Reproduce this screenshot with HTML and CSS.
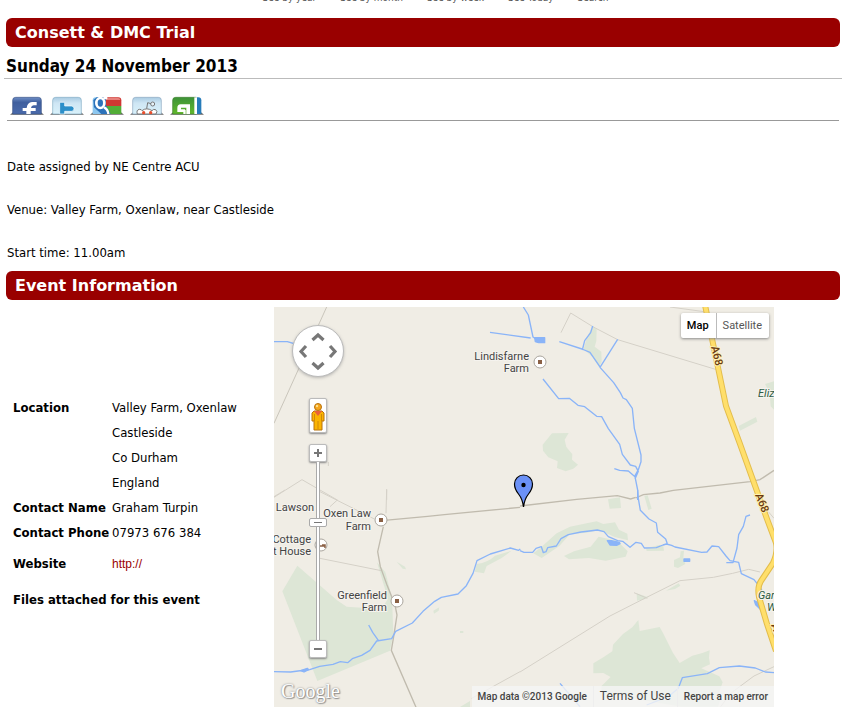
FILE: index.html
```html
<!DOCTYPE html>
<html lang="en">
<head>
<meta charset="utf-8">
<title>Consett &amp; DMC Trial</title>
<link rel="stylesheet" href="styles.css">
</head>
<body>
<nav class="views" aria-label="Calendar views">
  <a href="#">See by year</a>
  <a href="#">See by month</a>
  <a href="#">See by week</a>
  <a href="#">See Today</a>
  <a href="#">Search</a>
</nav>
<main class="event">
  <h1 class="bar">Consett &amp; DMC Trial</h1>
  <h2 class="date">Sunday 24 November 2013</h2>
  <div class="share">
    <a href="#" aria-label="Facebook"><svg viewBox="0 0 102 60">
      <defs>
        <linearGradient id="fb" x2="0" y2="1"><stop offset="0" stop-color="#6f8ec6"/><stop offset=".3" stop-color="#3f5f9e"/><stop offset="1" stop-color="#4a6aab"/></linearGradient>
        <linearGradient id="pale" x2="0" y2="1"><stop offset="0" stop-color="#a9cbe2"/><stop offset=".35" stop-color="#cfe6f4"/><stop offset="1" stop-color="#d9f2fb"/></linearGradient>
        <linearGradient id="green" x2="0" y2="1"><stop offset="0" stop-color="#3d9238"/><stop offset="1" stop-color="#62b92b"/></linearGradient>
      </defs>
      <path d="M0 56l10-8h82l10 8z" fill="#666"/><path d="M8 54V13q0-9 9-9h68q9 0 9 9v41z" fill="url(#fb)" stroke="#3b5487" stroke-width="2"/><path d="M38 36h12q2-17 16-18h14v10h-9q-7 1-8 8h14v9H62v9H49v-9H38z" fill="#fff"/>
    </svg></a>
    <a href="#" aria-label="Twitter"><svg viewBox="0 0 102 60">
      <path d="M0 56l10-8h82l10 8z" fill="#666"/><path d="M8 54V13q0-9 9-9h68q9 0 9 9v41z" fill="url(#pale)" stroke="#83adc4" stroke-width="2"/><path d="M29 19h15v11h20q8 0 8 8t-8 8H44v8H29z" fill="#2c8fc9" stroke="#fff" stroke-width="2"/>
    </svg></a>
    <a href="#" aria-label="Google Bookmarks"><svg viewBox="0 0 102 60">
      <path d="M0 56l10-8h82l10 8z" fill="#666"/><path d="M8 54V13q0-9 9-9h35v50z" fill="#8dc7ef"/><path d="M40 4h45q9 0 9 9v17H40z" fill="#cf3732"/><path d="M46 6h39q5 0 6 6H46z" fill="#e8807b"/><path d="M46 30h48v24H58z" fill="#52ad37"/><path d="M10 12l10-8h28v24l14 26H34L12 34z" fill="#2c72ba"/><ellipse cx="31" cy="21" rx="12" ry="15" fill="#2c72ba" stroke="#fff" stroke-width="8"/><path d="M42 34q12 6 13 20M40 6h12" fill="none" stroke="#fff" stroke-width="7"/>
    </svg></a>
    <a href="#" aria-label="Reddit"><svg viewBox="0 0 102 60">
      <path d="M0 56l10-8h82l10 8z" fill="#666"/><path d="M8 54V13q0-9 9-9h68q9 0 9 9v41z" fill="url(#pale)" stroke="#8ca8bf" stroke-width="2"/><path d="M22 54q-4-12 6-14 7 0 8 4 14-11 30 0 4-6 11-3 7 5 1 13z" fill="#fff" stroke="#777" stroke-width="3"/><path d="M50 38l3-18 10 3" fill="none" stroke="#777" stroke-width="3"/><circle cx="68" cy="24" r="6" fill="#e7f3fa" stroke="#777" stroke-width="3"/><circle cx="41" cy="50" r="5" fill="#e8502d"/><circle cx="62" cy="50" r="5" fill="#e8502d"/>
    </svg></a>
    <a href="#" aria-label="StumbleUpon"><svg viewBox="0 0 102 60">
      <path d="M0 56l10-8h82l10 8z" fill="#666"/><path d="M8 54V13q0-9 9-9h62v50z" fill="url(#green)" stroke="#3f8231" stroke-width="2"/><path d="M73 4h8v50h-8z" fill="#fff"/><path d="M81 4h4q9 0 9 9v41H81z" fill="#277cba"/><path d="M22 36q0-11 10-11h28v29H49V35H33v5h12v8H22z" fill="#fff"/><path d="M40 42h7v12h-7z" fill="#fff"/>
    </svg></a>
  </div>
  <div class="description">
    <p>Date assigned by NE Centre ACU</p>
    <p>Venue: Valley Farm, Oxenlaw, near Castleside</p>
    <p>Start time: 11.00am</p>
  </div>
  <h2 class="bar">Event Information</h2>
  <div class="info">
    <table class="details">
      <tbody>
        <tr><th scope="row">Location</th><td>Valley Farm, Oxenlaw</td></tr>
        <tr><th></th><td>Castleside</td></tr>
        <tr><th></th><td>Co Durham</td></tr>
        <tr><th></th><td>England</td></tr>
        <tr><th scope="row">Contact Name</th><td>Graham Turpin</td></tr>
        <tr><th scope="row">Contact Phone</th><td>07973 676 384</td></tr>
        <tr class="tall"><th scope="row">Website</th><td><a href="#">http://</a></td></tr>
        <tr class="tall"><th colspan="2">Files attached for this event</th></tr>
      </tbody>
    </table>
    <section class="map" aria-label="Map">
      <svg class="canvas" viewBox="0 0 500 400">
        <rect width="500" height="400" fill="#f0ede5"/>
        <!-- woodland -->
        <g fill="#dde6d6">
          <g transform="translate(246 -7) scale(.33333)">
            <path d="M218 78l12 10-1 35-5 17 20 15 1 31-8 15-20-30-26-24 10-35z"/>
            <path d="M96 400l50-1-12 20 5 22 18 22-1 16 18 15-14 12-23 8-26-10 2-20-28-12-16-20-1-18z"/>
            <path d="M656 378l52-27 4 14-52 27zM735 252l27-8v85l-10-10-3-40z"/>
          </g>
          <g transform="translate(-4 183) scale(.33333)">
            <path d="M82 227L37 304l105 269 218-91 10-50-4-110-20-75-25-30 15 50 18 60-20 30-104-7-30-20z"/>
            <path d="M380 215l25 15 3 8-10-2zM490 362l18-10-2 10-14 9zM570 423h10v6h-10zM620 222q35-5 55-25l50-15-30 22-45 24-8 22-28-5zM570 651l30-18v18z"/>
          </g>
          <g transform="translate(246 183) scale(.33333)">
            <path d="M264 28l36-6 3 32-34 2zM373 18l10-2 12 40-10 4z"/>
            <path d="M40 190l25-20 45-40 40-20 50-10 30-6 20 8 35-5 12 22 25 12 2 20-40-10-46-21-38 8-50 4-32 36-53 36z"/>
            <path d="M132 198l30-14 50-14 24-30 55 12 32 32-6 16-60 12-50-8-60 4z"/>
            <path d="M378 175l40-10 12 4 2 13-52 1zM462 210l18-8 2-18 10-2-2 22 6 18-22 12-12-4zM438 302l38-22 5 7-16 10zM350 310l35 12-12 6-22 4z"/>
            <path d="M355 390l-18 22-28 20-30 32-2 20-27 18-30 18v30l30-1 22 12-28 28v20l240 41h110l10-30-6-15 10-28-10-18-54-24 26-12-3-20 2-22-22 8-30 8-38 22-20-30-30-60-10-18-60 12z"/>
          </g>
        </g>
        <!-- minor roads and boundaries -->
        <g fill="none" stroke="#d5d1c8" stroke-width="3">
          <g transform="translate(-4 -7) scale(.33333)"><path d="M170 21L12 370" stroke="#c9c5bb"/><path d="M12 592l84-53 106 61M350 567v33M175 486v12"/></g>
          <g transform="translate(246 -7) scale(.33333)"><path d="M123 98l29-59 68 42 73 38 300 91M450 21l110 15"/></g>
          <g transform="translate(-4 183) scale(.33333)"><path d="M12 20L45 0M150 5l163 82M180 50l22-20M350 0l-2 70M150 205l184 37M750 545l-145 80"/></g>
          <g transform="translate(246 183) scale(.33333)"><path d="M0 546l270-168 110-56 100-50 100-10 58-12 48-12 34 8M342 308l40 17"/><path d="M762 530l-60 28-70 52-30 40M745 65l17 20"/></g>
        </g>
        <g fill="none" stroke="#c0bbae" stroke-width="4">
          <path transform="translate(-4 183) scale(.33333)" d="M335 92l138-13 50-5 227-22M340 110l-17 75 8 45 20 55 24 60 6 30-10 65-7 41 78 180"/>
          <path transform="translate(246 183) scale(.33333)" d="M0 48l170-20 122-11 40 10 15-5"/>
          <path transform="translate(246 -7) scale(.33333)" d="M347 594l23-10 50-5 40-8 230-26 30-6 42-28"/>
        </g>
        <!-- water -->
        <g fill="none" stroke="#8ab4f8" stroke-width="4" stroke-linejoin="round">
          <path transform="translate(-4 -7) scale(.33333)" d="M12 125h40l24 7M660 97l122 17"/>
          <g transform="translate(246 -7) scale(.33333)">
            <path d="M10 21l15 24 14 66 12 8M118 125l68 22 24 10 30 44M218 78l-6 20-18 24-7 28M293 118l-53 84 41 46 20 30 8 16 10 5 18 26 6 60 20 80v20l-8 24-11 20M69 237l47 59 32-1 26 21 20 4 36 29 15 1 20 36 34 47 8 30 24 32 16 4 8 15-10 23M283 506l16 5 26 2 20 17 8 40v30"/>
            <path d="M44 113h30v15H56l-10-3z" fill="#8ab4f8"/>
          </g>
          <g transform="translate(-4 183) scale(.33333)">
            <path d="M12 545l50 1 22-3 35-4 30-10 40-6 22-8 22 3 14-12 28-10 25-15 20-28 45-7 12-22 50-25 32-35 35-30 20-12 50-10 25-25 20-37 12-38 40-20 60-18 25 7 5-4M296 405l12 22 17 24"/>
            <path d="M92 542l20-7 4 4-14 7z" fill="#8ab4f8"/>
          </g>
          <g transform="translate(246 183) scale(.33333)">
            <path d="M0 182l12 5h26l10-12 16-5 6 18 8-3 5-12 26-5 14-22 22-12 38-8 25-3 24-3 20 5 13 15 28 12 15 2 22 18 18-15 16 3 9 14 36-1 20-8 10-3 16 4 10 5 80 16 16-1 15-18 20 2 22 28 12 14 26 5 8 34 38 18 16 20 14 22M353 0l2 26 6 35 26 26 22 12 4 28 24 20 5 14M690 75l-12 4-8 30-14 25-5 40-12 44-20 0M120 580l60 70M380 645l65-25 30-25 12-32 75-12 36-18 60-5 48 6 30 12 26 2 18-12"/>
            <path d="M262 152h12l24 5 2 4-10 5-20-1zM492 207h17v7h-17zM703 332l14 8 14 8 2 16-12-6-14-14z" fill="#8ab4f8"/>
          </g>
        </g>
        <!-- A68 -->
        <path d="M431 -2l21 101 14 38 27 75 9 24q2 9-3 20l-12 18q-4 6-2 16l8 27 9 27" fill="none" stroke="#e3bd4c" stroke-width="6"/>
        <path d="M431 -2l21 101 14 38 27 75 9 24q2 9-3 20l-12 18q-4 6-2 16l8 27 9 27" fill="none" stroke="#ffdf6b" stroke-width="4"/>
        <g class="place">
          <text x="255" y="53" text-anchor="end">Lindisfarne</text><text x="255" y="65" text-anchor="end">Farm</text>
          <text x="97" y="210" text-anchor="end">Oxen Law</text><text x="97" y="223" text-anchor="end">Farm</text>
          <text x="40" y="204" text-anchor="end">Lawson</text>
          <text x="37" y="236" text-anchor="end">Cottage</text><text x="37" y="248" text-anchor="end">t House</text>
          <text x="113" y="292" text-anchor="end">Greenfield</text><text x="113" y="304" text-anchor="end">Farm</text>
          <text class="park" x="484" y="90">Eliz</text><text class="park" x="484" y="292">Gar</text><text class="park" x="493" y="304">W</text>
          <text class="road" transform="translate(437 40) rotate(76)">A68</text>
          <text class="road" transform="translate(481 188) rotate(68)">A68</text>
          <text class="road" transform="translate(497 318) rotate(70)">A</text>
        </g>
        <g fill="#fff" stroke="#aaa59d"><circle cx="266" cy="55" r="6"/><circle cx="107" cy="213" r="6"/><circle cx="123" cy="294" r="6"/><circle cx="47" cy="238" r="6"/></g>
        <path d="M264 53h4v4h-4zM105 211h4v4h-4zM121 292h4v4h-4z" fill="#8a6045"/>
        <path d="M45 236v5M45 239h6M51 241v-3h-3" fill="none" stroke="#8a6045" stroke-width="1.5"/>
        <path d="M249.500 200q-1-8-5-13-4-5-4-10a9 9 0 0 1 18 0q0 5-4 10-4 5-5 13z" fill="#6b91f7" stroke="#000" stroke-width="1.200"/><circle cx="249.500" cy="178" r="2.200"/>
      </svg>
      <button class="pan" aria-label="Pan the map"><svg viewBox="0 0 50 50"><path d="M19.500 14l5.500-5 5.500 5M19.500 37l5.500 5 5.500-5M13 20l-5 5.500 5 5.500M37 20l5 5.500-5 5.500" fill="none" stroke="#777" stroke-width="3.200"/></svg></button>
      <button class="person" aria-label="Street View"><svg viewBox="0 0 16 32"><path d="M4 11h8l2 2v8h-2v9H4v-9H2v-8z" fill="#fbb400" stroke="#b8720d"/><path d="M4 11h8l-4 5z" fill="#e8613a"/><path d="M8 21v8M4.500 14v7M11.500 14v7" stroke="#d08a08"/><circle cx="8" cy="7" r="3.500" fill="#f5a51c" stroke="#b8720d"/><circle cx="7" cy="6" r="1.200" fill="#ffe08a"/></svg></button>
      <div class="zoom">
        <button aria-label="Zoom in"><svg viewBox="0 0 16 16"><path d="M8 4v8M4 8h8" stroke="#777" stroke-width="2"/></svg></button>
        <span class="track"><span class="thumb"></span></span>
        <button aria-label="Zoom out"><svg viewBox="0 0 16 16"><path d="M4 8h8" stroke="#777" stroke-width="2"/></svg></button>
      </div>
      <div class="types"><button class="on">Map</button><button>Satellite</button></div>
      <a class="logo" href="#">Google</a>
      <div class="credits"><span>Map data ©2013 Google</span><a class="terms" href="#">Terms of Use</a><a href="#">Report a map error</a></div>
    </section>
  </div>
</main>
</body>
</html>
```
FILE: styles.css
```css
* { box-sizing: border-box; }
body {
  margin: 0;
  background: #fff;
  color: #000;
  font: 13px/16px "DejaVu Sans Condensed", "DejaVu Sans", sans-serif;
}
a { text-decoration: none; }
button { margin: 0; padding: 0; border: 0; font: inherit; cursor: pointer; }
svg { display: block; }

.views {
  display: flex;
  justify-content: center;
  align-items: flex-end;
  gap: 24px;
  height: 4px;
  padding-left: 16px;
  overflow: hidden;
  font-size: 10px;
  line-height: 12px;
}
.views a { color: #555; }

.event { padding: 14px 13px 0 4px; }
.bar {
  margin: 0 2px;
  padding: 0 9px;
  border-radius: 6px;
  background: #900;
  color: #fff;
  font-family: "DejaVu Sans", sans-serif;
  font-size: 16px;
  line-height: 29px;
}
.date {
  margin: 0;
  padding: 7px 2px 0;
  border-bottom: 1px solid #bbb;
  font-size: 17px;
  line-height: 24px;
}
.share {
  display: flex;
  gap: 6px;
  margin: 0 3px;
  padding: 17px 3px 4px;
  border-bottom: 1px solid #999;
}
.share svg { width: 34px; height: 20px; }
.description { padding: 11px 3px 10px; }
.description p { margin: 0; padding-top: 27px; }

.info {
  display: flex;
  align-items: center;
  padding-top: 7px;
}
.details {
  flex: 0 0 270px;
  padding: 0 0 1px 9px;
  border-spacing: 0;
}
.details th, .details td { height: 25px; padding: 0; text-align: left; white-space: nowrap; }
.details th { width: 99px; }
.details .tall > * { height: 36px; }
.details a { color: #900; font-family: "Liberation Sans", sans-serif; font-size: 12px; }

.map {
  position: relative;
  flex: 0 1 500px;
  overflow: hidden;
  color: #444;
  font-family: Roboto, sans-serif;
}
.canvas { width: 100%; }
.place text {
  fill: #444;
  stroke: #f5f3ee;
  stroke-width: 2px;
  paint-order: stroke;
  font-size: 11px;
}
.place .park { fill: #2f5c43; font-style: italic; }
.place .road { fill: #6b3b10; stroke: #fff0b0; font-weight: 500; }

.pan {
  position: absolute;
  top: 18px;
  left: 18px;
  width: 52px;
  height: 52px;
  border: 1px solid #bbb;
  border-radius: 50%;
  background: #fff;
  box-shadow: 0 1px 3px #8888;
}
.person {
  position: absolute;
  top: 91px;
  left: 35px;
  width: 18px;
  height: 35px;
  border: 1px solid #bbb;
  border-radius: 2px;
  background: #fff;
  box-shadow: 0 1px 2px #888;
}
.zoom {
  position: absolute;
  top: 137px;
  left: 35px;
  width: 18px;
  height: 214px;
  display: flex;
  flex-direction: column;
  align-items: center;
}
.zoom button {
  width: 18px;
  height: 18px;
  border: 1px solid #bbb;
  border-radius: 2px;
  background: #fff;
  box-shadow: 0 1px 2px #888;
}
.track {
  flex: 1;
  display: flex;
  justify-content: center;
  width: 4px;
  padding-top: 56px;
  border: solid #aaa;
  border-width: 0 1px;
  background: #fff;
}
.thumb {
  flex: none;
  width: 18px;
  height: 9px;
  border: 1px solid #aaa;
  border-radius: 2px;
  background: linear-gradient(#777, #777) center / 8px 1px no-repeat #fff;
}
.types {
  position: absolute;
  top: 6px;
  right: 5px;
  display: flex;
  border-radius: 2px;
  background: #fff;
  box-shadow: 0 1px 3px #888;
  font-size: 11px;
  line-height: 25px;
}
.types button { padding: 0 7px 0 6px; background: none; color: #555; }
.types .on { border-right: 1px solid #bbb; color: #000; font-weight: 500; }
.logo {
  position: absolute;
  bottom: 4px;
  left: 7px;
  color: #fff;
  font: 20px/24px "Liberation Serif", serif;
  text-shadow: 0 0 2px #777, 1px 1px 1px #999;
}
.credits {
  position: absolute;
  right: 0;
  bottom: 0;
  display: flex;
  background: #f5f5f5cc;
  font-size: 10px;
  font-weight: 500;
  line-height: 21px;
  white-space: nowrap;
}
.credits > * { padding: 0 6px; color: #444; }
.credits .terms { font-size: 12px; font-weight: 400; border: solid #eee; border-width: 0 1px; }
```
